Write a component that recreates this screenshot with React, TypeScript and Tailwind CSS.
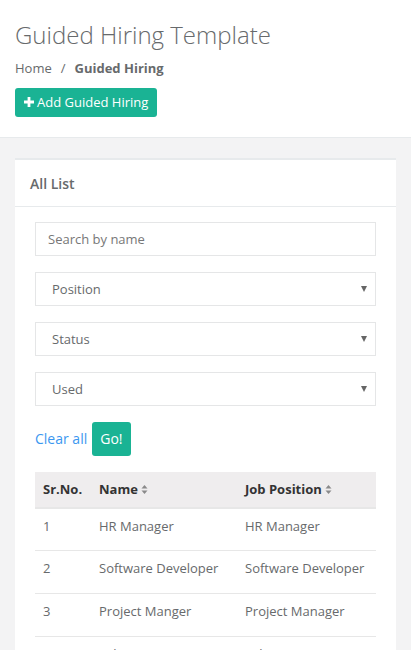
import React from "react";

const rows = [
  { no: 1, name: "HR Manager", position: "HR Manager" },
  { no: 2, name: "Software Developer", position: "Software Developer" },
  { no: 3, name: "Project Manger", position: "Project Manager" },
  { no: 4, name: "Sales Executive", position: "Sales Executive" },
];

function SortIcon() {
  return (
    <svg width="7" height="11" viewBox="0 0 7 11" className="ml-[3px] inline-block">
      <path d="M0.5 4.5 L3.5 1 L6.5 4.5 Z" fill="#8a8a8a" />
      <path d="M0.5 6.5 L3.5 10 L6.5 6.5 Z" fill="#8a8a8a" />
    </svg>
  );
}

function FakeSelect({ label }: { label: string }) {
  return (
    <div className="flex h-[34px] items-center justify-between border border-[#e5e6e7] bg-white pl-4 pr-[8px] text-[13px] text-[#676a6c]">
      <span>{label}</span>
      <svg width="6" height="6" viewBox="0 0 6 6">
        <path d="M0 0 H6 L3 6 Z" fill="#666" />
      </svg>
    </div>
  );
}

export default function App() {
  return (
    <div
      className="h-[650px] overflow-hidden bg-[#f3f3f4] text-[13px] leading-[1.42857] text-[#676a6c]"
      style={{ fontFamily: '"Open Sans", "Liberation Sans", sans-serif' }}
    >
      {/* page heading */}
      <div className="border-b border-[#e7eaec] bg-white px-[15px] pb-5 pt-[22px]">
        <h2 className="text-[24px] font-light leading-[1.1] text-[#676a6c]">
          Guided Hiring Template
        </h2>
        <div className="mt-[11px] flex items-center text-[13px]">
          <span>Home</span>
          <span className="px-[9px]">/</span>
          <span className="font-bold">Guided Hiring</span>
        </div>
        <button className="mt-[10px] flex h-[29px] items-center gap-[3px] rounded-[3px] bg-[#1ab394] px-[9px] text-[13px] text-white">
          <svg width="10" height="10" viewBox="0 0 10 10">
            <path d="M3.6 0 H6.4 V3.6 H10 V6.4 H6.4 V10 H3.6 V6.4 H0 V3.6 H3.6 Z" fill="#fff" />
          </svg>
          Add Guided Hiring
        </button>
      </div>

      <div className="px-[15px] pt-5">
        <div className="border-t-2 border-[#e7eaec] bg-white">
          <div className="h-[47px] border-b border-[#e7eaec] px-[15px] pt-[14px] text-[14px] font-semibold">
            All List
          </div>
          <div className="px-5 pt-[15px]">
            <div className="flex h-[34px] items-center border border-[#e5e6e7] px-3 text-[13px] text-[#777]">
              Search by name
            </div>
            <div className="mt-4 flex flex-col gap-4">
              <FakeSelect label="Position" />
              <FakeSelect label="Status" />
              <FakeSelect label="Used" />
            </div>
            <div className="mt-4 flex items-center gap-[5px]">
              <a className="text-[14px] text-[#3b97f0]">Clear all</a>
              <button className="h-[34px] rounded-[3px] bg-[#1ab394] px-2 text-[14px] text-white">
                Go!
              </button>
            </div>
            <table className="mt-4 w-full border-collapse text-left">
              <thead>
                <tr className="h-[35px] border-b-2 border-[#e7e7e7] bg-[#efedee] text-[13px] font-bold text-[#333]">
                  <th className="w-[56px] px-2 py-2">Sr.No.</th>
                  <th className="w-[146px] px-2 py-2">
                    <span className="inline-flex items-center">Name<SortIcon /></span>
                  </th>
                  <th className="px-2 py-2">
                    <span className="inline-flex items-center">Job Position<SortIcon /></span>
                  </th>
                </tr>
              </thead>
              <tbody>
                {rows.map((r) => (
                  <tr key={r.no} className="h-[43px] border-b border-[#e7e7e7] align-top">
                    <td className="px-2 pt-2">{r.no}</td>
                    <td className="px-2 pt-2">{r.name}</td>
                    <td className="px-2 pt-2">{r.position}</td>
                  </tr>
                ))}
              </tbody>
            </table>
          </div>
        </div>
      </div>
    </div>
  );
}
